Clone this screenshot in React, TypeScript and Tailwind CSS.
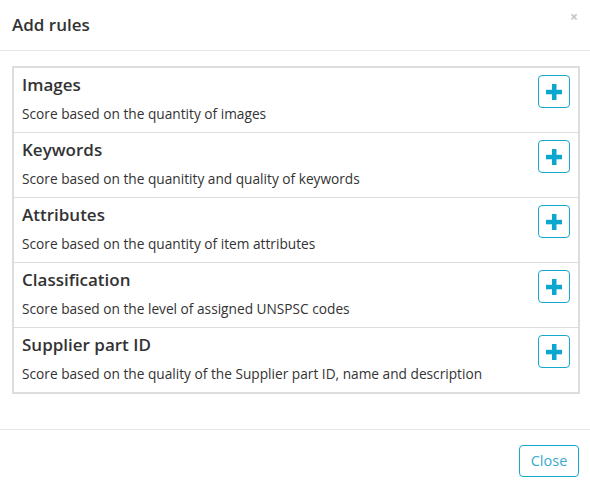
import React from "react";

const rules = [
  { title: "Images", desc: "Score based on the quantity of images" },
  { title: "Keywords", desc: "Score based on the quanitity and quality of keywords" },
  { title: "Attributes", desc: "Score based on the quantity of item attributes" },
  { title: "Classification", desc: "Score based on the level of assigned UNSPSC codes" },
  { title: "Supplier part ID", desc: "Score based on the quality of the Supplier part ID, name and description" },
];

function Plus() {
  return (
    <svg width="16" height="16" viewBox="0 0 16 16">
      <rect x="6" y="0" width="4.5" height="16" fill="#0ba7cf" />
      <rect x="0" y="5.8" width="16" height="4.5" fill="#0ba7cf" />
    </svg>
  );
}

export default function App() {
  return (
    <div className="w-[590px] h-[482px] bg-white text-[#333] font-['Open_Sans',sans-serif] flex flex-col">
      <div className="h-[51px] border-b border-[#e5e5e5] flex items-center justify-between pl-[12px] pr-[12px] shrink-0">
        <h2 className="text-[17px] font-semibold leading-none pb-[2px]">Add rules</h2>
        <span className="text-[#c5c5c5] text-[14px] font-bold leading-none self-start mt-[10px]">×</span>
      </div>
      <div className="px-[12px] pt-[15px] pb-[35px]">
        <div className="border-2 border-[#dddddd] w-[568px]">
          {rules.map((r, i) => (
            <div
              key={r.title}
              className={`flex justify-between pl-[8px] pr-[8px] ${i > 0 ? "h-[65px] border-t border-[#dddddd]" : "h-[64px]"}`}
            >
              <div className="flex flex-col pt-[6px]">
                <div className="text-[17px] font-semibold leading-[22px]">{r.title}</div>
                <div className="text-[13.7px] leading-[18px] mt-[9px]">{r.desc}</div>
              </div>
              <button className="mt-[7px] w-[32px] h-[33px] border border-[#17a8cf] rounded-[4px] flex items-center justify-center bg-white">
                <Plus />
              </button>
            </div>
          ))}
        </div>
      </div>
      <div className="border-t border-[#e5e5e5] flex justify-end pr-[11px] pt-[15px]">
        <button className="w-[60px] h-[32px] border border-[#17a8cf] rounded-[4px] text-[#3aa9cd] text-[14.5px] bg-white">
          Close
        </button>
      </div>
    </div>
  );
}
